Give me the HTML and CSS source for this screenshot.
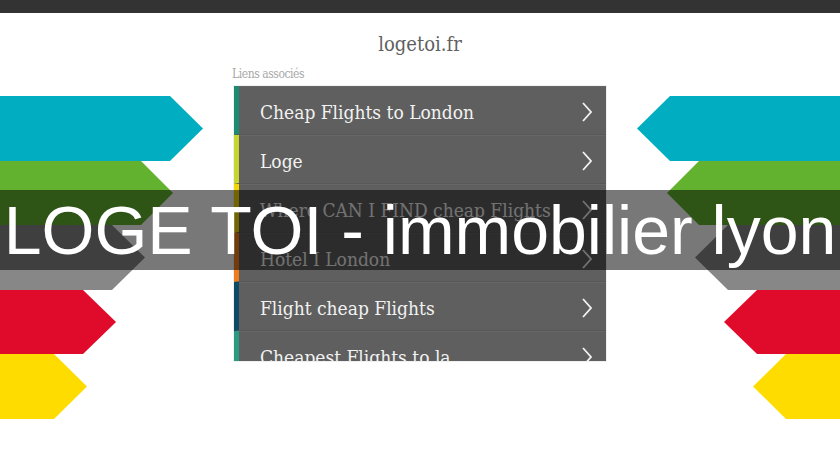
FILE: index.html
```html
<!DOCTYPE html>
<html lang="fr">
<head>
<meta charset="utf-8">
<title>logetoi.fr</title>
<link rel="stylesheet" href="styles.css">
</head>
<body>
<div class="page">
  <svg class="arrows" width="840" height="460" viewBox="0 0 840 460" aria-hidden="true">
    <g>
      <polygon fill="#00adc1" points="0,96 170,96 203,128.5 170,161 0,161"/>
      <polygon fill="#62b22f" points="0,161 141,161 173,193 141,225 0,225"/>
      <polygon fill="#878787" points="0,225 112,225 145,257.5 112,290 0,290"/>
      <polygon fill="#e00a2b" points="0,290 83,290 116,322 83,354 0,354"/>
      <polygon fill="#ffdc00" points="0,354 54,354 87,386.5 54,419 0,419"/>
    </g>
    <g>
      <polygon fill="#00adc1" points="840,96 670,96 637,128.5 670,161 840,161"/>
      <polygon fill="#62b22f" points="840,161 699,161 667,193 699,225 840,225"/>
      <polygon fill="#878787" points="840,225 728,225 695,257.5 728,290 840,290"/>
      <polygon fill="#e00a2b" points="840,290 757,290 724,322 757,354 840,354"/>
      <polygon fill="#ffdc00" points="840,354 786,354 753,386.5 786,419 840,419"/>
    </g>
  </svg>

  <div class="topbar"></div>
  <h1 class="site-title">logetoi.fr</h1>

  <div class="links">
    <div class="links-label">Liens associés</div>
    <ul class="link-list">
      <li class="link-item c1"><span class="link-text">Cheap Flights to London</span><svg class="chev" width="10" height="20" viewBox="0 0 10 20"><polyline points="1,1 9,10 1,19"/></svg></li>
      <li class="link-item c2"><span class="link-text">Loge</span><svg class="chev" width="10" height="20" viewBox="0 0 10 20"><polyline points="1,1 9,10 1,19"/></svg></li>
      <li class="link-item c3"><span class="link-text">Where CAN I FIND cheap Flights</span><svg class="chev" width="10" height="20" viewBox="0 0 10 20"><polyline points="1,1 9,10 1,19"/></svg></li>
      <li class="link-item c4"><span class="link-text">Hotel I London</span><svg class="chev" width="10" height="20" viewBox="0 0 10 20"><polyline points="1,1 9,10 1,19"/></svg></li>
      <li class="link-item c5"><span class="link-text">Flight cheap Flights</span><svg class="chev" width="10" height="20" viewBox="0 0 10 20"><polyline points="1,1 9,10 1,19"/></svg></li>
      <li class="link-item c6"><span class="link-text">Cheapest Flights to la</span><svg class="chev" width="10" height="20" viewBox="0 0 10 20"><polyline points="1,1 9,10 1,19"/></svg></li>
    </ul>
  </div>

  <div class="banner">LOGE TOI - immobilier lyon</div>
</div>
</body>
</html>
```

FILE: styles.css
```css
* { box-sizing: border-box; }

html, body {
  margin: 0;
  padding: 0;
  background: #ffffff;
}

body {
  font-family: "DejaVu Serif Condensed", "DejaVu Serif", serif;
}

.page {
  position: relative;
  width: 840px;
  height: 460px;
  overflow: hidden;
  background: #ffffff;
}

.arrows {
  position: absolute;
  left: 0;
  top: 0;
  z-index: 0;
}

.topbar {
  position: relative;
  height: 13px;
  background: #333333;
}

.site-title {
  position: relative;
  margin: 19px 0 0;
  font-family: "DejaVu Serif Condensed", "DejaVu Serif", serif;
  font-size: 20px;
  line-height: 24px;
  font-weight: normal;
  text-align: center;
  color: #5f5f5f;
}

.links {
  position: relative;
  width: 372px;
  margin: 10px auto 0;
}

.links-label {
  margin-left: -2px;
  padding-top: 1px;
  font-size: 12px;
  line-height: 14px;
  letter-spacing: -0.45px;
  color: #a8a8a8;
}

.link-list {
  list-style: none;
  margin: 5px 0 0;
  padding: 0;
  height: 275px;
  overflow: hidden;
  background: #5f5f5f;
  box-shadow: 0 0 0 1px rgba(0, 0, 0, 0.06);
}

.link-item {
  display: flex;
  align-items: center;
  justify-content: space-between;
  height: 49px;
  padding: 0 14px 0 21px;
  border-left: 5px solid #1c8b72;
  border-bottom: 1px solid #585858;
  box-shadow: inset 0 1px 0 rgba(255, 255, 255, 0.05);
  color: #f2f2f2;
  font-size: 19px;
}

.link-item.c1 { border-left-color: #1c8b72; }
.link-item.c2 { border-left-color: #c6d52f; }
.link-item.c3 { border-left-color: #f3d500; }
.link-item.c4 { border-left-color: #f07d1a; }
.link-item.c5 { border-left-color: #0c4a66; }
.link-item.c6 { border-left-color: #2a9b80; }

.link-text {
  white-space: nowrap;
  padding-top: 4px;
}

.chev {
  flex: none;
  margin-top: 3px;
}

.chev polyline {
  fill: none;
  stroke: #f2f2f2;
  stroke-width: 1.8;
}

.banner {
  position: absolute;
  left: 0;
  top: 190px;
  width: 840px;
  height: 80px;
  z-index: 5;
  background: rgba(0, 0, 0, 0.53);
  color: #ffffff;
  font-family: "Liberation Sans", Arial, sans-serif;
  font-size: 68px;
  line-height: 80px;
  text-align: center;
  white-space: nowrap;
}
```
